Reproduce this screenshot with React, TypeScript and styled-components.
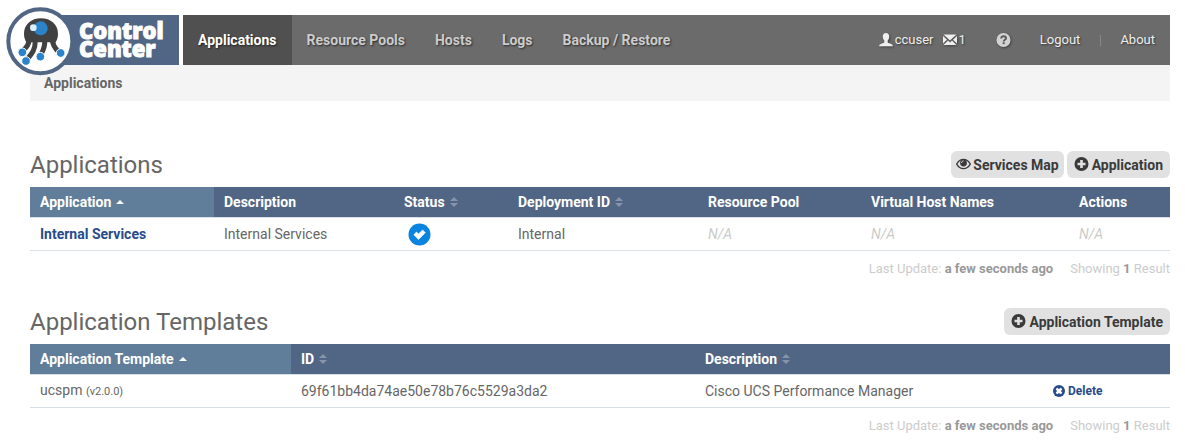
import React from "react";
import styled, { createGlobalStyle } from "styled-components";

const color = {
  navy: "#516685",
  steel: "#607d99",
  text: "#666666",
  link: "#274b8b",
  bar: "#6b6b6b",
  barActive: "#505050",
  pale: "#f4f4f4",
  line: "#d9dfe7",
  muted: "#cccccc",
};

const GlobalStyle = createGlobalStyle`
  *, *::before, *::after { box-sizing: border-box; }
  body {
    margin: 0;
    background: #ffffff;
    color: ${color.text};
    font-family: Roboto, "Liberation Sans", sans-serif;
    font-size: 14px;
    line-height: 20px;
  }
  a { color: inherit; text-decoration: none; }
  button { font: inherit; color: inherit; border: 0; cursor: pointer; }
`;

const Page = styled.div`
  padding: 15px 15px 0 30px;
`;

const Header = styled.header`
  position: relative;
  display: flex;
  height: 50px;
  background: ${color.bar};
`;

const Brand = styled.a`
  width: 153px;
  flex: none;
  padding: 6px 0 0 49px;
  background: ${color.navy};
  border-right: 4px solid #ffffff;
  color: #ffffff;
  font-family: "Open Sans", "Noto Sans", sans-serif;
  font-size: 22px;
  font-weight: 800;
  line-height: 18px;
  -webkit-text-stroke: 1px #ffffff;
`;

const BrandLine = styled.span`
  display: block;
`;

const Badge = styled.svg`
  position: absolute;
  left: -24px;
  top: -8px;
  width: 69px;
  height: 69px;
`;

const Nav = styled.nav`
  display: flex;
`;

const NavLink = styled.a<{ $active?: boolean }>`
  padding: 15px 15px 0;
  background: ${(p) => (p.$active ? color.barActive : "transparent")};
  color: ${(p) => (p.$active ? "#ffffff" : "#cccccc")};
  font-weight: 700;
  text-shadow: 1px 1px 2px rgba(0, 0, 0, 0.6);
`;

const UserNav = styled.nav`
  display: flex;
  align-items: center;
  margin-left: auto;
  padding-right: 15px;
  color: #eeeeee;
  font-size: 13px;
  text-shadow: 1px 1px 2px rgba(0, 0, 0, 0.5);
`;

const UserLink = styled.a<{ $gap?: number }>`
  display: flex;
  align-items: center;
  gap: 2px;
  margin-left: ${(p) => p.$gap ?? 0}px;

  svg { filter: drop-shadow(1px 1px 1px rgba(0, 0, 0, 0.4)); }
`;

const Divider = styled.span`
  width: 1px;
  height: 11px;
  margin-left: 20px;
  background: #888888;
`;

const Crumbs = styled.nav`
  height: 36px;
  padding: 8px 14px;
  background: ${color.pale};
  font-weight: 700;
`;

const Main = styled.main`
  display: flex;
  flex-direction: column;
  gap: 29px;
  padding-top: 50px;
`;

const SectionHead = styled.div`
  display: flex;
  align-items: center;
  justify-content: space-between;
  height: 27px;
  margin-bottom: 9px;
`;

const Title = styled.h1`
  margin: 0;
  padding-top: 2px;
  font-size: 24px;
  font-weight: 400;
  line-height: 27px;
`;

const Actions = styled.div`
  display: flex;
  gap: 3px;
`;

const ActionButton = styled.button<{ $compact?: boolean }>`
  display: flex;
  align-items: center;
  gap: ${(p) => (p.$compact ? 2 : 3)}px;
  height: 27px;
  padding: 0 ${(p) => (p.$compact ? 5 : 7)}px;
  border-radius: 6px;
  background: #e1e1e1;
  color: #3a3a3a;
  font-weight: 700;
`;

const Table = styled.table`
  width: 100%;
  table-layout: fixed;
  border-collapse: separate;
  border-spacing: 0;
`;

const HeadCell = styled.th<{ $sorted?: boolean }>`
  height: 31px;
  padding: 0 10px;
  border-bottom: 1px solid ${color.line};
  background: ${(p) => (p.$sorted ? color.steel : color.navy)};
  color: #ffffff;
  font-weight: 700;
  text-align: left;
`;

const SortButton = styled.button`
  display: flex;
  align-items: center;
  gap: 5px;
  padding: 0;
  background: none;
  white-space: nowrap;
`;

const Cell = styled.td`
  height: 33px;
  padding: 0 10px;
  border-bottom: 1px solid ${color.line};
`;

const ServiceLink = styled.a`
  color: ${color.link};
  font-weight: 700;
`;

const NotAvailable = styled.span`
  color: ${color.muted};
  font-style: italic;
`;

const Version = styled.small`
  font-size: 11px;
`;

const DeleteButton = styled.button`
  display: flex;
  align-items: center;
  gap: 3px;
  padding: 0;
  background: none;
  color: ${color.link};
  font-size: 12px;
  font-weight: 700;
`;

const StatusIcon = styled.svg`
  display: block;
  margin-left: 4px;
`;

const TableFooter = styled.footer`
  display: flex;
  justify-content: flex-end;
  gap: 17px;
  padding-top: 8px;
  color: ${color.muted};
  font-size: 13px;

  strong { color: #999999; }
`;

function OctopusBadge() {
  return (
    <Badge viewBox="0 0 207 207" aria-hidden="true">
      <circle cx="103" cy="103" r="96" fill="#fff" stroke={color.navy} strokeWidth="12" />
      <g fill="none" stroke="#414141" strokeWidth="15">
        <path d="M70 92C70 112 62 120 52 130" />
        <path d="M88 100C88 130 76 142 64 156" />
        <path d="M116 100C118 120 112 130 105 142" />
        <path d="M138 92C139 114 148 126 159 135" />
      </g>
      <path
        fill="#414141"
        d="M54 80C54 52 76 34 105 34S156 52 156 80C156 92 153 98 149 106H61C57 98 54 92 54 80Z"
      />
      <circle cx="104" cy="64" r="21" fill="#2b83c9" />
      <circle cx="82" cy="62" r="10" fill="#d8f1fb" />
      <g fill="#2b83c9" stroke="#fff" strokeWidth="3">
        <circle cx="49" cy="136" r="13" />
        <circle cx="60" cy="162" r="13" />
        <circle cx="103" cy="149" r="13" />
        <circle cx="164" cy="138" r="13" />
      </g>
    </Badge>
  );
}

const UserIcon = () => (
  <svg width="14" height="14" viewBox="0 0 14 14" fill="currentColor" aria-hidden="true">
    <path d="M7 0C9 0 10.2 1.4 10.2 3.6C10.2 5.3 9.6 6.6 8.7 7.5V9C8.7 9.6 9 9.8 9.8 10.1L12.6 11.2C13.5 11.6 13.8 12.1 13.8 13.2H.2C.2 12.1.5 11.6 1.4 11.2L4.2 10.1C5 9.8 5.3 9.6 5.3 9V7.5C4.4 6.6 3.8 5.3 3.8 3.6C3.8 1.4 5 0 7 0Z" />
  </svg>
);

const MailIcon = () => (
  <svg width="14" height="12" viewBox="0 0 14 12" fill="currentColor" aria-hidden="true">
    <path d="M.5.5H13.5L7 6.5ZM0 1.9L4.1 5.7L0 9.6ZM14 1.9V9.6L9.9 5.7ZM.5 11L5 6.6L7 8.4L9 6.6L13.5 11Z" />
  </svg>
);

const HelpIcon = () => (
  <svg width="15" height="15" viewBox="0 0 15 15" aria-hidden="true">
    <circle cx="7.5" cy="7" r="7" fill="#d2d2d2" />
    <path d="M5.2 5.5C5.2 4 6.1 3.3 7.6 3.3S10 4.1 10 5.3C10 6.8 7.7 6.7 7.7 8.5" fill="none" stroke="#5a5a5a" strokeWidth="1.9" />
    <path d="M6.7 9.3H8.7V11.1H6.7Z" fill="#5a5a5a" />
  </svg>
);

const EyeIcon = () => (
  <svg width="15" height="13" viewBox="0 0 15 13" aria-hidden="true">
    <path d="M.7 6.1C2.4 3 4.8 1.4 7.5 1.4S12.6 3 14.3 6.1C12.6 9.1 10.2 10.6 7.5 10.6S2.4 9.1.7 6.1Z" fill="none" stroke="currentColor" strokeWidth="1.3" />
    <circle cx="7.5" cy="5" r="3.4" fill="currentColor" />
    <path d="M5.6 5C5.6 3.8 6.3 3 7.5 2.9" fill="none" stroke="#e1e1e1" strokeWidth="1" />
  </svg>
);

const PlusIcon = () => (
  <svg width="15" height="15" viewBox="0 0 15 15" aria-hidden="true">
    <circle cx="7.5" cy="7" r="7" fill="currentColor" />
    <path d="M6.2 3H8.8V5.7H11.5V8.3H8.8V11H6.2V8.3H3.5V5.7H6.2Z" fill="#e1e1e1" />
  </svg>
);

const RemoveIcon = () => (
  <svg width="12" height="12" viewBox="0 0 12 12" aria-hidden="true">
    <circle cx="6" cy="6" r="6" fill="currentColor" />
    <path d="M4.2 2.7L6 4L7.8 2.7L9.3 4.2L8 6L9.3 7.8L7.8 9.3L6 8L4.2 9.3L2.7 7.8L4 6L2.7 4.2Z" fill="#fff" />
  </svg>
);

const Passing = () => (
  <StatusIcon width="23" height="23" viewBox="0 0 23 23" role="img" aria-label="Passing">
    <circle cx="11.5" cy="11.5" r="11" fill="#0a84de" />
    <path d="M5.8 11.7L8.5 9L10.5 11L14.6 6.9L17.3 9.7L10.5 16.5Z" fill="#fff" stroke="#fff" strokeWidth=".6" strokeLinejoin="round" />
  </StatusIcon>
);

const SortIcon = ({ sorted }: { sorted?: boolean }) => (
  <svg width="8" height="10" viewBox="0 0 8 10" aria-hidden="true">
    {sorted ? (
      <path d="M0 7L4 3L8 7Z" fill="#fff" />
    ) : (
      <path d="M0 4L4 0L8 4ZM0 6H8L4 10Z" fill="#8694aa" />
    )}
  </svg>
);

type Column = { label: string; width: number; sort?: "none" | "ascending" };

function DataTable({ label, columns, children }: { label: string; columns: Column[]; children: React.ReactNode }) {
  return (
    <Table aria-label={label}>
      <colgroup>
        {columns.map((c, i) => (
          <col key={i} width={c.width} />
        ))}
      </colgroup>
      <thead>
        <tr>
          {columns.map((c, i) => (
            <HeadCell key={i} scope="col" $sorted={c.sort === "ascending"} aria-sort={c.sort}>
              {c.sort ? (
                <SortButton type="button">
                  {c.label}
                  <SortIcon sorted={c.sort === "ascending"} />
                </SortButton>
              ) : (
                c.label
              )}
            </HeadCell>
          ))}
        </tr>
      </thead>
      <tbody>{children}</tbody>
    </Table>
  );
}

const Summary = () => (
  <TableFooter>
    <span>
      Last Update: <strong>a few seconds ago</strong>
    </span>
    <span>
      Showing <strong>1</strong> Result
    </span>
  </TableFooter>
);

const applicationColumns: Column[] = [
  { label: "Application", width: 184, sort: "ascending" },
  { label: "Description", width: 180 },
  { label: "Status", width: 114, sort: "none" },
  { label: "Deployment ID", width: 190, sort: "none" },
  { label: "Resource Pool", width: 163 },
  { label: "Virtual Host Names", width: 208 },
  { label: "Actions", width: 101 },
];

const templateColumns: Column[] = [
  { label: "Application Template", width: 261, sort: "ascending" },
  { label: "ID", width: 404, sort: "none" },
  { label: "Description", width: 348, sort: "none" },
  { label: "", width: 127 },
];

export default function App() {
  return (
    <>
      <GlobalStyle />
      <Page>
        <Header>
          <Brand href="#">
            <BrandLine>Control</BrandLine>
            <BrandLine>Center</BrandLine>
            <OctopusBadge />
          </Brand>
          <Nav aria-label="Main">
            <NavLink href="#" $active>Applications</NavLink>
            <NavLink href="#">Resource Pools</NavLink>
            <NavLink href="#">Hosts</NavLink>
            <NavLink href="#">Logs</NavLink>
            <NavLink href="#">Backup / Restore</NavLink>
          </Nav>
          <UserNav aria-label="User">
            <UserLink href="#"><UserIcon />ccuser</UserLink>
            <UserLink href="#" $gap={9}><MailIcon />1</UserLink>
            <UserLink href="#" $gap={30} aria-label="Help"><HelpIcon /></UserLink>
            <UserLink href="#" $gap={29}>Logout</UserLink>
            <Divider />
            <UserLink href="#" $gap={19}>About</UserLink>
          </UserNav>
        </Header>
        <Crumbs aria-label="Breadcrumb">Applications</Crumbs>

        <Main>
          <section>
            <SectionHead>
              <Title>Applications</Title>
              <Actions>
                <ActionButton type="button" $compact><EyeIcon />Services Map</ActionButton>
                <ActionButton type="button"><PlusIcon />Application</ActionButton>
              </Actions>
            </SectionHead>
            <DataTable label="Applications" columns={applicationColumns}>
              <tr>
                <Cell><ServiceLink href="#">Internal Services</ServiceLink></Cell>
                <Cell>Internal Services</Cell>
                <Cell><Passing /></Cell>
                <Cell>Internal</Cell>
                <Cell><NotAvailable>N/A</NotAvailable></Cell>
                <Cell><NotAvailable>N/A</NotAvailable></Cell>
                <Cell><NotAvailable>N/A</NotAvailable></Cell>
              </tr>
            </DataTable>
            <Summary />
          </section>

          <section>
            <SectionHead>
              <Title as="h2">Application Templates</Title>
              <Actions>
                <ActionButton type="button"><PlusIcon />Application Template</ActionButton>
              </Actions>
            </SectionHead>
            <DataTable label="Application Templates" columns={templateColumns}>
              <tr>
                <Cell>ucspm <Version>(v2.0.0)</Version></Cell>
                <Cell>69f61bb4da74ae50e78b76c5529a3da2</Cell>
                <Cell>Cisco UCS Performance Manager</Cell>
                <Cell><DeleteButton type="button"><RemoveIcon />Delete</DeleteButton></Cell>
              </tr>
            </DataTable>
            <Summary />
          </section>
        </Main>
      </Page>
    </>
  );
}
